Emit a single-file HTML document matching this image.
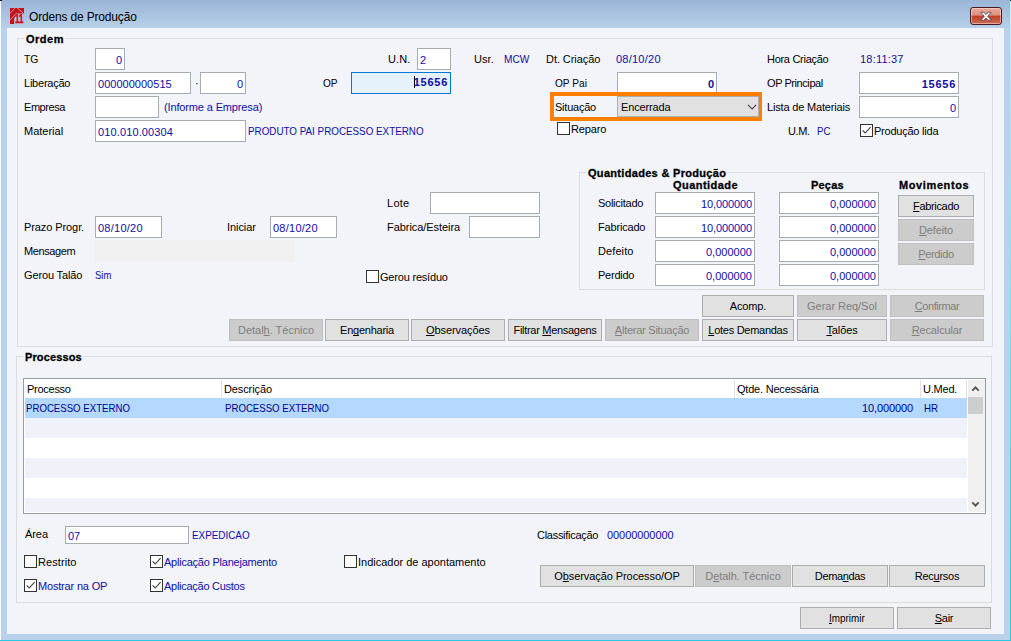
<!DOCTYPE html><html><head><meta charset="utf-8"><title>Ordens de Produção</title><style>
*{box-sizing:border-box;margin:0;padding:0}
html,body{width:1011px;height:641px;overflow:hidden;background:#b9d1ea}
body{position:relative;font-family:"Liberation Sans",sans-serif;font-size:11px;color:#000}
.abs,.t,.v,.b,.in,.btn,.cb,.gb,.gl,.g{position:absolute}
.t,.v,.b,.g{white-space:nowrap;line-height:13px;height:13px;font-family:"Liberation Sans",sans-serif;font-size:11px}
.t{color:#000}
.v{color:#0e0ea4}
.b{font-weight:bold;color:#000;-webkit-text-stroke:0.3px #000}
.in{background:#fff;border:1px solid #a9abb2}
.in span{position:absolute;white-space:nowrap;line-height:13px;top:5px;font-size:11px;color:#0e0ea4}
.in span.l{left:2px}
.in span.r{right:2px}
.btn{background:#e1e1e1;border:1px solid #adadad;text-align:center;font-size:11px;line-height:20px;white-space:nowrap;color:#000}
.btn.d{background:#cccccc;border-color:#bfbfbf;color:#7e7e7e}
.btn u{text-decoration:underline;text-underline-offset:1px;text-decoration-skip-ink:none}
.cb{width:13px;height:13px;border:1px solid #333;background:#fff}
.cb svg{position:absolute;left:0;top:0}
.gb{border:1px solid #dcdcdc}
.gl{background:#f3f4fa}
</style></head><body>
<div class="abs" style="left:0;top:0;width:1011px;height:641px;background:#b9d1ea"></div>
<div class="abs" style="left:0;top:0;width:1011px;height:30px;background:linear-gradient(#9ab5d6,#b9d1ea)"></div>
<div class="abs" style="left:0;top:0;width:1px;height:641px;background:#fbfcfe"></div>
<div class="abs" style="left:0;top:640px;width:1011px;height:1px;background:#2ac8e2"></div>
<div class="abs" style="left:1010px;top:0;width:1px;height:641px;background:linear-gradient(#bdf5fb,#2ac8e2)"></div>
<div class="abs" style="left:0;top:0;width:2px;height:1px;background:#111"></div>
<div class="abs" style="left:1010px;top:0;width:1px;height:1px;background:#0a3a3a"></div>
<div class="abs" style="left:7px;top:28px;width:997px;height:606px;background:#f3f4fa"></div>
<svg class="abs" style="left:10px;top:8px" width="14" height="16" viewBox="0 0 14 16">
<path d="M0 0 H14 V5.6 H6.4 L4.2 10.2 V16 H0 Z" fill="#c4121a"/>
<path d="M0 5.2 L5.4 0 M0 12 L6.4 5.2 M7.2 0 L13.4 5.2" stroke="#e3aeb6" stroke-width="0.8" fill="none"/>
</svg>
<div class="abs" style="left:15px;top:13.4px;width:14px;height:11px;font:bold 11px/11px 'Liberation Sans',sans-serif;color:#d40a14;-webkit-text-stroke:0.5px #d40a14;transform:scale(0.72,1.12);transform-origin:0 0;white-space:nowrap">11</div>
<div class="abs" style="left:29px;top:10px;font-size:12px;line-height:15px;white-space:nowrap;color:#000;letter-spacing:-0.17px">Ordens de Produção</div>
<div class="abs" style="left:970px;top:7px;width:32px;height:18px;border:1px solid #471a24;border-radius:3px;background:linear-gradient(#e9ab9c 0%,#dc8f7e 45%,#bf3f25 50%,#cf6a54 100%);box-shadow:inset 0 0 0 1px rgba(255,220,210,.55)">
<svg class="abs" style="left:8px;top:3px" width="14" height="10.5" viewBox="0 0 12 10" preserveAspectRatio="none"><path d="M1.5 1.2 L4 1.2 L6 3.3 L8 1.2 L10.5 1.2 L7.4 5 L10.5 8.8 L8 8.8 L6 6.7 L4 8.8 L1.5 8.8 L4.6 5 Z" fill="#fff" stroke="#4a4f63" stroke-width="0.8" stroke-linejoin="round"/></svg></div>
<div class="gb" style="left:17px;top:38px;width:976px;height:309px"></div>
<div class="gl" style="left:24px;top:33px;width:40.5px;height:13px"></div>
<span class="b" style="left:26px;top:33px;letter-spacing:0.51px">Ordem</span>
<span class="t" style="left:24px;top:53px;;display:inline-block;transform:scaleX(0.942);transform-origin:0 50%">TG</span>
<div class="in" style="left:95px;top:48px;width:30px;height:22px;"><span class="r" style="">0</span></div>
<span class="t" style="left:24px;top:77px;;letter-spacing:-0.23px">Liberação</span>
<div class="in" style="left:95px;top:72px;width:96px;height:22px;"><span class="l" style=";letter-spacing:0.02px">000000000515</span></div>
<span class="t" style="left:195px;top:77px;">·</span>
<div class="in" style="left:200px;top:72px;width:46px;height:22px;"><span class="r" style="">0</span></div>
<span class="t" style="left:24px;top:101px;;letter-spacing:-0.44px">Empresa</span>
<div class="in" style="left:95px;top:96px;width:64px;height:22px;"></div>
<span class="v" style="left:164px;top:101px;;letter-spacing:-0.14px">(Informe a Empresa)</span>
<span class="t" style="left:24px;top:125px;;letter-spacing:-0.00px">Material</span>
<div class="in" style="left:95px;top:120px;width:151px;height:22px;"><span class="l" style=";letter-spacing:0.13px">010.010.00304</span></div>
<span class="v" style="left:248px;top:125px;;display:inline-block;transform:scaleX(0.894);transform-origin:0 50%">PRODUTO PAI PROCESSO EXTERNO</span>
<span class="t" style="left:388px;top:53px;;letter-spacing:0.13px">U.N.</span>
<div class="in" style="left:417px;top:48px;width:34px;height:22px;"><span class="l" style="">2</span></div>
<span class="t" style="left:474px;top:53px;;letter-spacing:0.05px">Usr.</span>
<span class="v" style="left:504px;top:53px;;display:inline-block;transform:scaleX(0.920);transform-origin:0 50%">MCW</span>
<span class="t" style="left:546px;top:53px;;letter-spacing:-0.06px">Dt. Criação</span>
<span class="v" style="left:616px;top:53px;;letter-spacing:0.24px">08/10/20</span>
<span class="t" style="left:767px;top:53px;;letter-spacing:-0.29px">Hora Criação</span>
<span class="v" style="left:860px;top:53px;;letter-spacing:0.20px">18:11:37</span>
<span class="t" style="left:323px;top:77px;;display:inline-block;transform:scaleX(0.918);transform-origin:0 50%">OP</span>
<div class="in" style="left:351px;top:72px;width:100px;height:22px;background:#e5f1fb;border-color:#0078d7"><span class="r" style="font-weight:bold;top:3px;letter-spacing:0.73px">15656</span></div>
<div class="abs" style="left:414px;top:76px;width:1px;height:12px;background:#000"></div>
<span class="t" style="left:555px;top:77px;;display:inline-block;transform:scaleX(0.920);transform-origin:0 50%">OP Pai</span>
<div class="in" style="left:617px;top:72px;width:100px;height:22px;"><span class="r" style="font-weight:bold">0</span></div>
<span class="t" style="left:767px;top:77px;;letter-spacing:-0.43px">OP Principal</span>
<div class="in" style="left:859px;top:72px;width:100px;height:22px;"><span class="r" style="font-weight:bold;letter-spacing:0.73px">15656</span></div>
<div class="abs" style="left:550px;top:92px;width:212px;height:29px;border:4px solid #ff8000"></div>
<span class="t" style="left:555px;top:101px;;letter-spacing:-0.23px">Situação</span>
<div class="abs" style="left:617px;top:96px;width:142px;height:21px;background:#e1e1e1;border:1px solid #adadad"></div>
<span class="t" style="left:621px;top:101px;;letter-spacing:-0.15px">Encerrada</span>
<svg class="abs" style="left:747px;top:104px" width="10" height="7" viewBox="0 0 10 7"><path d="M1 0.8 L5.1 4.9 L9.2 0.8" fill="none" stroke="#444" stroke-width="1.1"/></svg>
<span class="t" style="left:767px;top:101px;;letter-spacing:-0.18px">Lista de Materiais</span>
<div class="in" style="left:859px;top:96px;width:100px;height:22px;"><span class="r" style="">0</span></div>
<div class="cb" style="left:557px;top:122px"></div>
<span class="t" style="left:571px;top:123px;;letter-spacing:-0.12px">Reparo</span>
<span class="t" style="left:788px;top:125px;;letter-spacing:-0.38px">U.M.</span>
<span class="v" style="left:817px;top:125px;;display:inline-block;transform:scaleX(0.877);transform-origin:0 50%">PC</span>
<div class="cb" style="left:860px;top:124px"><svg width="11" height="11" viewBox="0 0 11 11"><path d="M1.6 5.4 L4.2 8 L9.6 2.2" fill="none" stroke="#3c3c3c" stroke-width="1.1"/></svg></div>
<span class="t" style="left:874px;top:125px;;letter-spacing:-0.23px">Produção lida</span>
<span class="t" style="left:387px;top:197px;;letter-spacing:0.26px">Lote</span>
<div class="in" style="left:430px;top:192px;width:110px;height:22px;"></div>
<span class="t" style="left:387px;top:221px;;letter-spacing:-0.06px">Fabrica/Esteira</span>
<div class="in" style="left:469px;top:216px;width:71px;height:22px;"></div>
<span class="t" style="left:24px;top:221px;;letter-spacing:-0.09px">Prazo Progr.</span>
<div class="in" style="left:95px;top:216px;width:67px;height:22px;"><span class="l" style=";letter-spacing:0.25px">08/10/20</span></div>
<span class="t" style="left:227px;top:221px;;letter-spacing:-0.07px">Iniciar</span>
<div class="in" style="left:270px;top:216px;width:67px;height:22px;"><span class="l" style=";letter-spacing:0.25px">08/10/20</span></div>
<span class="t" style="left:24px;top:245px;;letter-spacing:-0.40px">Mensagem</span>
<div class="abs" style="left:95px;top:240px;width:200px;height:22px;background:#f0f0f0"></div>
<span class="t" style="left:24px;top:269px;;letter-spacing:-0.14px">Gerou Talão</span>
<span class="v" style="left:95px;top:269px;;display:inline-block;transform:scaleX(0.860);transform-origin:0 50%">Sim</span>
<div class="cb" style="left:366px;top:270px"></div>
<span class="t" style="left:380px;top:271px;;letter-spacing:-0.20px">Gerou resíduo</span>
<div class="gb" style="left:579px;top:172px;width:406px;height:118px"></div>
<div class="gl" style="left:586px;top:167px;width:141px;height:13px"></div>
<span class="b" style="left:588px;top:167px;letter-spacing:0.31px">Quantidades &amp; Produção</span>
<span class="b" style="left:673px;top:179px;;letter-spacing:0.45px">Quantidade</span>
<span class="b" style="left:811px;top:179px;;letter-spacing:0.20px">Peças</span>
<span class="b" style="left:899px;top:179px;;letter-spacing:0.61px">Movimentos</span>
<span class="t" style="left:598px;top:197px;;letter-spacing:-0.26px">Solicitado</span>
<div class="in" style="left:655px;top:192px;width:100px;height:22px;"><span class="r" style=";letter-spacing:-0.11px">10,000000</span></div>
<div class="in" style="left:779px;top:192px;width:100px;height:22px;"><span class="r" style=";letter-spacing:0.02px">0,000000</span></div>
<span class="t" style="left:598px;top:221px;;letter-spacing:-0.18px">Fabricado</span>
<div class="in" style="left:655px;top:216px;width:100px;height:22px;"><span class="r" style=";letter-spacing:-0.11px">10,000000</span></div>
<div class="in" style="left:779px;top:216px;width:100px;height:22px;"><span class="r" style=";letter-spacing:0.02px">0,000000</span></div>
<span class="t" style="left:598px;top:245px;;letter-spacing:0.09px">Defeito</span>
<div class="in" style="left:655px;top:240px;width:100px;height:22px;"><span class="r" style=";letter-spacing:0.02px">0,000000</span></div>
<div class="in" style="left:779px;top:240px;width:100px;height:22px;"><span class="r" style=";letter-spacing:0.02px">0,000000</span></div>
<span class="t" style="left:598px;top:269px;;letter-spacing:-0.24px">Perdido</span>
<div class="in" style="left:655px;top:264px;width:100px;height:22px;"><span class="r" style=";letter-spacing:0.02px">0,000000</span></div>
<div class="in" style="left:779px;top:264px;width:100px;height:22px;"><span class="r" style=";letter-spacing:0.02px">0,000000</span></div>
<div class="btn" style="left:898px;top:195px;width:76px;height:22px"><span class="" style=";letter-spacing:-0.32px"><u>F</u>abricado</span></div>
<div class="btn d" style="left:898px;top:219px;width:76px;height:22px"><span class="" style=";letter-spacing:-0.11px"><u>D</u>efeito</span></div>
<div class="btn d" style="left:898px;top:243px;width:76px;height:22px"><span class="" style=";letter-spacing:-0.37px"><u>P</u>erdido</span></div>
<div class="btn" style="left:702px;top:295px;width:92px;height:22px"><span class="" style=";letter-spacing:-0.14px">Acomp.</span></div>
<div class="btn d" style="left:797px;top:295px;width:90px;height:22px"><span class="" style=";letter-spacing:-0.04px">Gerar Req/Sol</span></div>
<div class="btn d" style="left:890px;top:295px;width:94px;height:22px"><span class="" style=";letter-spacing:-0.42px"><u>C</u>onfirmar</span></div>
<div class="btn d" style="left:229px;top:319px;width:94px;height:22px"><span class="" style=";letter-spacing:-0.01px">Detal<u>h</u>. Técnico</span></div>
<div class="btn" style="left:325px;top:319px;width:84px;height:22px"><span class="" style=";letter-spacing:-0.24px">En<u>g</u>enharia</span></div>
<div class="btn" style="left:411px;top:319px;width:94px;height:22px"><span class="" style=";letter-spacing:-0.07px"><u>O</u>bservações</span></div>
<div class="btn" style="left:508px;top:319px;width:94px;height:22px"><span class="" style=";letter-spacing:-0.30px">Filtrar <u>M</u>ensagens</span></div>
<div class="btn d" style="left:605px;top:319px;width:94px;height:22px"><span class="" style=";letter-spacing:-0.25px"><u>A</u>lterar Situação</span></div>
<div class="btn" style="left:702px;top:319px;width:92px;height:22px"><span class="" style=";letter-spacing:-0.27px"><u>L</u>otes Demandas</span></div>
<div class="btn" style="left:797px;top:319px;width:90px;height:22px"><span class="" style=";letter-spacing:-0.12px"><u>T</u>alões</span></div>
<div class="btn d" style="left:890px;top:319px;width:94px;height:22px"><span class="" style=";letter-spacing:-0.13px"><u>R</u>ecalcular</span></div>
<div class="gb" style="left:16px;top:356px;width:976px;height:247px"></div>
<div class="gl" style="left:23px;top:351px;width:59.6px;height:13px"></div>
<span class="b" style="left:25px;top:351px;letter-spacing:0.12px">Processos</span>
<div class="abs" style="left:23px;top:378px;width:963px;height:136px;border:1px solid #9a9da5;background:#fff"></div>
<div class="abs" style="left:25px;top:398px;width:942px;height:20px;background:#b4d8ff"></div>
<div class="abs" style="left:25px;top:418px;width:942px;height:20px;background:#f0f1f9"></div>
<div class="abs" style="left:25px;top:458px;width:942px;height:20px;background:#f0f1f9"></div>
<div class="abs" style="left:25px;top:498px;width:942px;height:14px;background:#f0f1f9"></div>
<div class="abs" style="left:221px;top:380px;width:1px;height:18px;background:#e2e2e2"></div>
<div class="abs" style="left:734px;top:380px;width:1px;height:18px;background:#e2e2e2"></div>
<div class="abs" style="left:920px;top:380px;width:1px;height:18px;background:#e2e2e2"></div>
<div class="abs" style="left:966px;top:380px;width:1px;height:18px;background:#e2e2e2"></div>
<span class="g" style="left:27px;top:383px;letter-spacing:-0.27px">Processo</span>
<span class="g" style="left:224px;top:383px;letter-spacing:-0.11px">Descrição</span>
<span class="g" style="left:737px;top:383px;letter-spacing:-0.21px">Qtde. Necessária</span>
<span class="g" style="left:923px;top:383px;letter-spacing:-0.21px">U.Med.</span>
<span class="g" style="left:26px;top:402px;color:#00008c;display:inline-block;transform:scaleX(0.876);transform-origin:0 50%">PROCESSO EXTERNO</span>
<span class="g" style="left:225px;top:402px;color:#00008c;display:inline-block;transform:scaleX(0.876);transform-origin:0 50%">PROCESSO EXTERNO</span>
<span class="g" style="left:924px;top:402px;color:#00008c;display:inline-block;transform:scaleX(0.881);transform-origin:0 50%">HR</span>
<span class="g" style="right:98px;top:402px;color:#00008c;letter-spacing:-0.10px">10,000000</span>
<div class="abs" style="left:968px;top:380px;width:17px;height:132px;background:#f0f0f0"></div>
<div class="abs" style="left:968px;top:397px;width:15px;height:17px;background:#cdcdcd"></div>
<svg class="abs" style="left:971px;top:385px" width="9" height="7" viewBox="0 0 9 7"><path d="M1.3 5.6 L4.5 2.4 L7.7 5.6" fill="none" stroke="#555" stroke-width="2"/></svg>
<svg class="abs" style="left:971px;top:501px" width="9" height="7" viewBox="0 0 9 7"><path d="M1.3 1.4 L4.5 4.6 L7.7 1.4" fill="none" stroke="#555" stroke-width="2"/></svg>
<span class="t" style="left:25px;top:528px;;letter-spacing:-0.08px">Área</span>
<div class="in" style="left:65px;top:526px;width:124px;height:18px;"><span class="l" style="top:3px">07</span></div>
<span class="v" style="left:192px;top:529px;;display:inline-block;transform:scaleX(0.897);transform-origin:0 50%">EXPEDICAO</span>
<span class="t" style="left:537px;top:529px;;letter-spacing:-0.28px">Classificação</span>
<span class="v" style="left:607px;top:529px;;letter-spacing:-0.07px">00000000000</span>
<div class="cb" style="left:24px;top:555px"></div>
<span class="t" style="left:38px;top:556px;;letter-spacing:0.08px">Restrito</span>
<div class="cb" style="left:150px;top:555px"><svg width="11" height="11" viewBox="0 0 11 11"><path d="M1.6 5.4 L4.2 8 L9.6 2.2" fill="none" stroke="#3c3c3c" stroke-width="1.1"/></svg></div>
<span class="v" style="left:164px;top:556px;;letter-spacing:-0.23px">Aplicação Planejamento</span>
<div class="cb" style="left:344px;top:555px"></div>
<span class="t" style="left:358px;top:556px;;letter-spacing:-0.01px">Indicador de apontamento</span>
<div class="cb" style="left:24px;top:579px"><svg width="11" height="11" viewBox="0 0 11 11"><path d="M1.6 5.4 L4.2 8 L9.6 2.2" fill="none" stroke="#3c3c3c" stroke-width="1.1"/></svg></div>
<span class="v" style="left:38px;top:580px;;letter-spacing:-0.18px">Mostrar na OP</span>
<div class="cb" style="left:150px;top:579px"><svg width="11" height="11" viewBox="0 0 11 11"><path d="M1.6 5.4 L4.2 8 L9.6 2.2" fill="none" stroke="#3c3c3c" stroke-width="1.1"/></svg></div>
<span class="v" style="left:164px;top:580px;;letter-spacing:-0.27px">Aplicação Custos</span>
<div class="btn" style="left:540px;top:565px;width:154px;height:22px"><span class="" style=";letter-spacing:-0.08px">O<u>b</u>servação Processo/OP</span></div>
<div class="btn d" style="left:695px;top:565px;width:96px;height:22px"><span class="" style=";letter-spacing:-0.05px">D<u>e</u>talh. Técnico</span></div>
<div class="btn" style="left:792px;top:565px;width:96px;height:22px"><span class="" style=";letter-spacing:-0.37px">Dema<u>n</u>das</span></div>
<div class="btn" style="left:889px;top:565px;width:96px;height:22px"><span class="" style=";letter-spacing:-0.25px">Rec<u>u</u>rsos</span></div>
<div class="btn" style="left:800px;top:607px;width:94px;height:22px"><span class="" style=";display:inline-block;transform:scaleX(0.898);transform-origin:50% 50%"><u>I</u>mprimir</span></div>
<div class="btn" style="left:897px;top:607px;width:94px;height:22px"><span class="" style=";letter-spacing:-0.29px"><u>S</u>air</span></div>
</body></html>
